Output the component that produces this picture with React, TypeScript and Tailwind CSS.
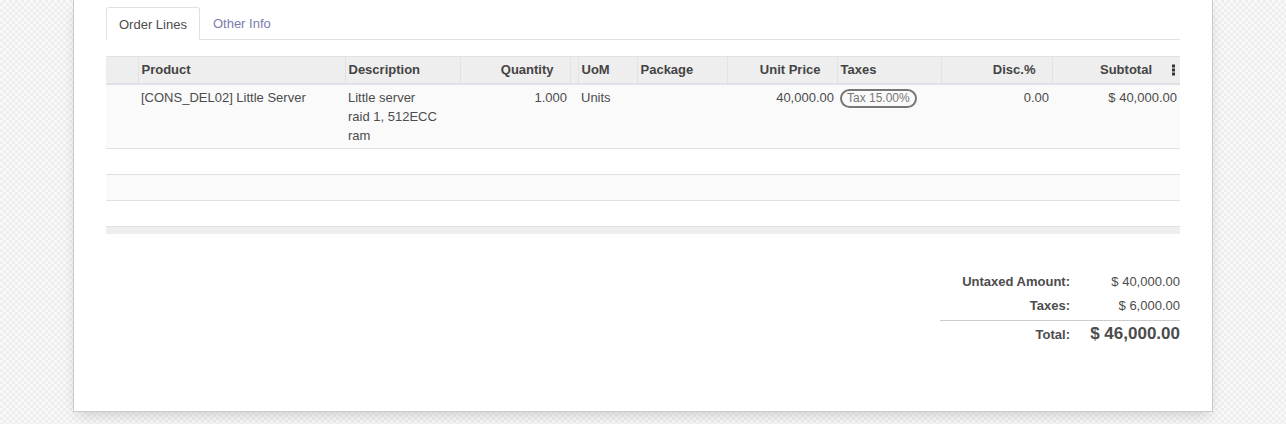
const cols = [
  { key: 'handle', label: '', w: 'w-[32px]', align: 'left' },
  { key: 'product', label: 'Product', w: 'w-[207px]', align: 'left' },
  { key: 'desc', label: 'Description', w: 'w-[115px]', align: 'left' },
  { key: 'qty', label: 'Quantity', w: 'w-[110px]', align: 'right' },
  { key: 'gap', label: '', w: 'w-[8px]', align: 'left' },
  { key: 'uom', label: 'UoM', w: 'w-[59px]', align: 'left' },
  { key: 'pkg', label: 'Package', w: 'w-[90px]', align: 'left' },
  { key: 'price', label: 'Unit Price', w: 'w-[110px]', align: 'right' },
  { key: 'taxes', label: 'Taxes', w: 'w-[104px]', align: 'left' },
  { key: 'disc', label: 'Disc.%', w: 'w-[111px]', align: 'right' },
  { key: 'subtotal', label: 'Subtotal', w: 'w-[128px]', align: 'right' },
];

function Kebab() {
  return (
    <span className="absolute right-[5px] top-1/2 flex -translate-y-1/2 flex-col gap-[1px]">
      <span className="block h-[3px] w-[3px] bg-[#333]" />
      <span className="block h-[3px] w-[3px] bg-[#333]" />
      <span className="block h-[3px] w-[3px] bg-[#333]" />
    </span>
  );
}

export default function App() {
  return (
    <div
      className="h-[424px] w-[1286px] overflow-hidden bg-[#f5f5f5] bg-[conic-gradient(#eeeeee_25%,#f9f9f9_0_50%,#eeeeee_0_75%,#f9f9f9_0)] bg-size-[6px_6px] text-[13px] text-[#4c4c4c]"
      style={{ fontFamily: '"Liberation Sans", Arial, sans-serif' }}
    >
      <div className="ml-[73px] h-[412px] w-[1140px] border-x border-b border-[#c9c9d3] bg-white px-[32px] pt-[7px] shadow-[0_6px_14px_-4px_rgba(0,0,0,0.18)]">
        {/* Tabs */}
        <div className="flex border-b border-[#dee2e6]">
          <div className="-mb-px rounded-t-[3px] border border-b-white border-[#dee2e6] bg-white px-[12px] pt-[7px] pb-[5px] leading-[19px]">
            Order Lines
          </div>
          <div className="px-[13px] pt-[7px] pb-[5px] leading-[19px] text-[#7c7bad]">Other Info</div>
        </div>

        {/* Table */}
        <table className="mt-[16px] w-[1074px] table-fixed border-collapse">
          <thead>
            <tr className="h-[27px] bg-[#eeeeee] border-t border-[#dee2e6]">
              {cols.map((c, i) => (
                <th
                  key={c.key}
                  className={`${c.w} relative border-b-2 border-[#dee2e6] pl-[3px] pr-[4px] pt-[1px] font-bold leading-[18px] text-[#444] ${
                    i > 0 ? 'border-l border-l-[#e2e2e2]' : ''
                  } ${c.align === 'right' ? 'pr-[16px] text-right' : 'text-left'} ${
                    c.key === 'subtotal' ? 'pr-[28px]' : ''
                  }`}
                >
                  {c.label}
                  {c.key === 'subtotal' && <Kebab />}
                </th>
              ))}
            </tr>
          </thead>
          <tbody className="leading-[19px]">
            <tr className="h-[65px] bg-[#fafafa] border-b border-[#dee2e6] align-top">
              <td className="pt-[3px]" />
              <td className="pl-[3px] pr-[4px] pt-[3px]">[CONS_DEL02] Little Server</td>
              <td className="pl-[3px] pr-[3px] pt-[3px]">
                Little server
                <br />
                raid 1, 512ECC
                <br />
                ram
              </td>
              <td className="px-[3px] pt-[3px] text-right">1.000</td>
              <td />
              <td className="pl-[3px] pr-[3px] pt-[3px]">Units</td>
              <td />
              <td className="px-[3px] pt-[3px] text-right">40,000.00</td>
              <td className="pl-[3px] pr-[3px] pt-[3px]">
                <span className="inline-block rounded-full border-2 border-[#777] px-[5px] text-[12px] leading-[15px] text-[#777]">
                  Tax 15.00%
                </span>
              </td>
              <td className="px-[3px] pt-[3px] text-right">0.00</td>
              <td className="px-[3px] pt-[3px] text-right">$ 40,000.00</td>
            </tr>
            <tr className="h-[26px] border-b border-[#dee2e6] bg-white">
              <td colSpan={11} />
            </tr>
            <tr className="h-[26px] border-b border-[#dee2e6] bg-[#fafafa]">
              <td colSpan={11} />
            </tr>
            <tr className="h-[26px] bg-white">
              <td colSpan={11} />
            </tr>
          </tbody>
          <tfoot>
            <tr className="h-[7px] border-t border-[#dee2e6] bg-[#eeeeee]">
              <td colSpan={11} />
            </tr>
          </tfoot>
        </table>

        {/* Totals */}
        <div className="mt-[36px] flex justify-end">
          <div className="w-[240px]">
            <div className="grid grid-cols-[130px_110px] leading-[24px]">
              <div className="text-right font-bold">Untaxed Amount:</div>
              <div className="text-right">$ 40,000.00</div>
              <div className="text-right font-bold">Taxes:</div>
              <div className="text-right">$ 6,000.00</div>
            </div>
            <div className="mt-[2px] border-t border-[#cccccc]" />
            <div className="grid grid-cols-[130px_110px] items-baseline">
              <div className="text-right font-bold leading-[26px]">Total:</div>
              <div className="text-right text-[17px] font-bold leading-[26px]">$ 46,000.00</div>
            </div>
          </div>
        </div>
      </div>
    </div>
  );
}
